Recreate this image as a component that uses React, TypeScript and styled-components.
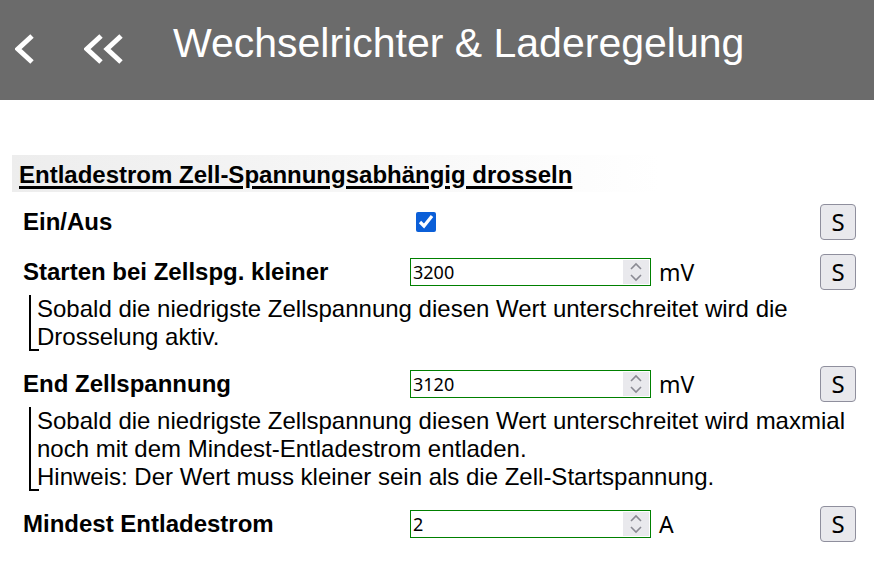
import React from 'react'
import styled, { createGlobalStyle } from 'styled-components'

const GlobalStyle = createGlobalStyle`
  body {
    margin: 0;
    background: #fff;
    font-family: 'Liberation Sans', Arial, sans-serif;
    color: #000;
  }
`

type Setting = {
  label: string
  value: string
  unit: string
  hint?: string[]
}

const settings: Setting[] = [
  {
    label: 'Starten bei Zellspg. kleiner',
    value: '3200',
    unit: 'mV',
    hint: ['Sobald die niedrigste Zellspannung diesen Wert unterschreitet wird die Drosselung aktiv.'],
  },
  {
    label: 'End Zellspannung',
    value: '3120',
    unit: 'mV',
    hint: [
      'Sobald die niedrigste Zellspannung diesen Wert unterschreitet wird maxmial noch mit dem Mindest-Entladestrom entladen.',
      'Hinweis: Der Wert muss kleiner sein als die Zell-Startspannung.',
    ],
  },
  { label: 'Mindest Entladestrom', value: '2', unit: 'A' },
]

const Chevron = ({ x }: { x: number }) => (
  <polyline points={`${x + 17},2 ${x + 3},15 ${x + 17},28`} fill='none' stroke='#fff' strokeWidth='5' />
)

const App = () => {
  return (
    <>
      <GlobalStyle />
      <Header>
        <NavButton $width={69}>
          <svg width='24' height='30' viewBox='0 0 24 30'>
            <Chevron x={0} />
          </svg>
        </NavButton>
        <NavButton $width={89}>
          <svg width='46' height='30' viewBox='0 0 46 30'>
            <Chevron x={0} />
            <Chevron x={20} />
          </svg>
        </NavButton>
        <Title>Wechselrichter &amp; Laderegelung</Title>
      </Header>
      <Content>
        <SectionTitle>
          <span>Entladestrom Zell-Spannungsabhängig drosseln</span>
        </SectionTitle>
        <Row>
          <Label>Ein/Aus</Label>
          <Field>
            <Checkbox type='checkbox' defaultChecked />
          </Field>
          <SaveButton>S</SaveButton>
        </Row>
        {settings.map((s) => (
          <React.Fragment key={s.label}>
            <Row>
              <Label>{s.label}</Label>
              <Field>
                <InputBox>
                  <NumberInput type='number' defaultValue={s.value} />
                  <Spinner>
                    <svg width='12' height='22' viewBox='0 0 12 22'>
                      <polyline points='1,8 6,3 11,8' fill='none' stroke='#8a8a93' strokeWidth='1.6' />
                      <polyline points='1,14 6,19 11,14' fill='none' stroke='#8a8a93' strokeWidth='1.6' />
                    </svg>
                  </Spinner>
                </InputBox>
                <Unit>{s.unit}</Unit>
              </Field>
              <SaveButton>S</SaveButton>
            </Row>
            {s.hint && (
              <Hint>
                {s.hint.map((line) => (
                  <div key={line}>{line}</div>
                ))}
              </Hint>
            )}
          </React.Fragment>
        ))}
      </Content>
    </>
  )
}
export default App

const Header = styled.header`
  height: 100px;
  background: #6b6b6b;
  color: #fff;
  display: flex;
  align-items: center;
  padding: 0 0 14px 15px;
  box-sizing: border-box;
`

const NavButton = styled.span<{ $width: number }>`
  width: ${(p) => p.$width}px;
  display: flex;
  align-items: center;
  margin-top: 12px;

  svg {
    display: block;
  }
`

const Title = styled.h1`
  margin: 0;
  font-size: 41px;
  font-weight: 400;
`

const Content = styled.main`
  padding-top: 55px;
`

const SectionTitle = styled.h2`
  margin: 0 214px 8px 12px;
  height: 37px;
  display: flex;
  align-items: center;
  padding-left: 7px;
  background: linear-gradient(to right, #ededed, #ffffff);
  font-size: 24px;
  font-weight: 700;

  span {
    text-decoration: underline;
    text-decoration-thickness: 3px;
    text-underline-offset: 3px;
    margin-top: 2px;
  }
`

const Row = styled.div`
  display: flex;
  align-items: center;
  padding: 4px 18px 4px 23px;
  margin-top: 6px;
`

const Label = styled.div`
  width: 387px;
  font-size: 24px;
  font-weight: 700;
`

const Field = styled.div`
  flex: 1;
  display: flex;
  align-items: center;
  gap: 8px;
`

const Checkbox = styled.input`
  width: 20px;
  height: 20px;
  margin: 0 0 0 6px;
  accent-color: #0b5fd8;
`

const InputBox = styled.div`
  width: 241px;
  height: 28px;
  box-sizing: border-box;
  border: 1px solid #008000;
  display: flex;
  background: #fff;
`

const NumberInput = styled.input`
  flex: 1;
  min-width: 0;
  border: none;
  padding: 0 2px;
  font-family: 'Noto Sans', 'Open Sans', sans-serif;
  font-size: 18px;
  outline: none;
  background: transparent;
  -moz-appearance: textfield;

  &::-webkit-inner-spin-button,
  &::-webkit-outer-spin-button {
    -webkit-appearance: none;
    margin: 0;
  }
`

const Spinner = styled.span`
  width: 26px;
  margin: 1px 1px 1px 0;
  background: #e9e9ed;
  display: flex;
  align-items: center;
  justify-content: center;
`

const Unit = styled.span`
  font-family: 'Noto Sans', 'Open Sans', sans-serif;
  font-size: 23px;
`

const SaveButton = styled.button`
  width: 36px;
  height: 36px;
  padding: 0;
  border: 1px solid #8f8f9d;
  border-radius: 4px;
  background: #e9e9ed;
  font-family: 'Noto Sans', 'Open Sans', sans-serif;
  font-size: 24px;
  line-height: 1;
  color: #000;
`

const Hint = styled.div`
  position: relative;
  margin: 1px 18px 11px 29px;
  padding-left: 6px;
  border-left: 2px solid #000;
  font-size: 24px;
  line-height: 28px;

  &::after {
    content: '';
    position: absolute;
    left: -2px;
    bottom: 0;
    width: 10px;
    border-bottom: 2px solid #000;
  }
`
